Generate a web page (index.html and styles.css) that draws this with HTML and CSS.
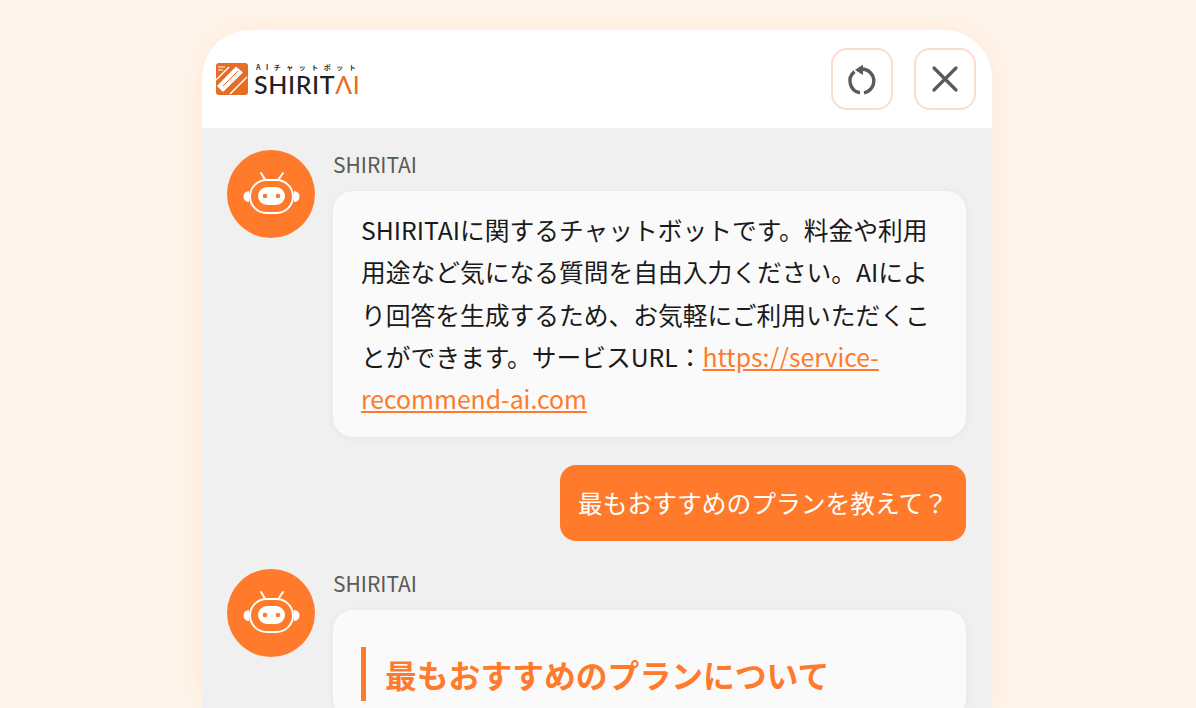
FILE: index.html
```html
<!DOCTYPE html>
<html lang="ja">

<head>
  <meta charset="UTF-8">
  <meta name="viewport" content="width=device-width, initial-scale=1.0">
  <title>SHIRITAI</title>
  <link rel="stylesheet" href="styles.css">
</head>

<body>

  <div class="panel">
    <header class="header">
      <div class="logo">
        <svg class="logo-mark" width="32" height="32" viewBox="0 0 32 32">
          <rect width="32" height="32" rx="3" fill="#e56d25"/>
          <path d="M2 4h7M2 7h5" stroke="#fff" stroke-width="1.200"/>
          <path d="M0 17L13 4" stroke="#fff" stroke-width="1.500"/>
          <path d="M7 29l-6-6L20 3.500l7 6z" fill="#fff"/>
          <path d="M7 23L22 8" stroke="#e56d25" stroke-width="1"/>
          <path d="M14 31L31 14" stroke="#fff" stroke-width="1.500"/>
        </svg>
        <div class="logo-text">
          <span class="logo-sub">AIチャットボット</span>
          <span class="logo-name">SHIRIT<span class="logo-ai">ΛI</span></span>
        </div>
      </div>
      <div class="header-buttons">
        <button class="icon-button" aria-label="リセット">
          <svg width="32" height="34" viewBox="0 0 32 34" fill="none" stroke="#5a5a5a" stroke-width="3.400">
            <path d="M14 30.800A12 12 0 0 1 8.500 9.600"/>
            <path d="M18 30.800A12 12 0 0 0 16 7"/>
            <path d="M9 8L17 2.500V13z" fill="#5a5a5a" stroke="none"/>
          </svg>
        </button>
        <button class="icon-button" aria-label="閉じる">
          <svg width="28" height="28" viewBox="0 0 28 28" fill="none" stroke="#5a5a5a" stroke-width="3.200" stroke-linecap="round">
            <path d="M3 3l22 22M25 3L3 25"/>
          </svg>
        </button>
      </div>
    </header>

    <main class="chat">
      <div class="message">
        <div class="avatar">
          <svg width="60" height="52" viewBox="0 0 60 52">
            <path d="M20 5l4 6.500M42 5l-4.500 6.500" stroke="#fff" stroke-width="2" stroke-linecap="round"/>
            <rect x="9" y="12" width="43" height="33" rx="16.500" fill="none" stroke="#fff" stroke-width="2"/>
            <path d="M8 23a5.500 5.500 0 0 0 0 11zM53 23a5.500 5.500 0 0 1 0 11z" fill="#fff"/>
            <rect x="17" y="19" width="27" height="18" rx="9" fill="#fff"/>
            <circle cx="24" cy="28" r="2.300" fill="#ff7a2b"/>
            <circle cx="37" cy="28" r="2.300" fill="#ff7a2b"/>
          </svg>
        </div>
        <div class="message-body">
          <div class="sender">SHIRITAI</div>
          <div class="bubble">
            SHIRITAIに関するチャットボットです。料金や利用用途など気になる質問を自由入力ください。AIにより回答を生成するため、お気軽にご利用いただくことができます。サービスURL：<a href="#">https://service-recommend-ai.com</a>
          </div>
        </div>
      </div>

      <div class="user-row">
        <div class="user-bubble">最もおすすめのプランを教えて？</div>
      </div>

      <div class="message">
        <div class="avatar">
          <svg width="60" height="52" viewBox="0 0 60 52">
            <path d="M20 5l4 6.500M42 5l-4.500 6.500" stroke="#fff" stroke-width="2" stroke-linecap="round"/>
            <rect x="9" y="12" width="43" height="33" rx="16.500" fill="none" stroke="#fff" stroke-width="2"/>
            <path d="M8 23a5.500 5.500 0 0 0 0 11zM53 23a5.500 5.500 0 0 1 0 11z" fill="#fff"/>
            <rect x="17" y="19" width="27" height="18" rx="9" fill="#fff"/>
            <circle cx="24" cy="28" r="2.300" fill="#ff7a2b"/>
            <circle cx="37" cy="28" r="2.300" fill="#ff7a2b"/>
          </svg>
        </div>
        <div class="message-body">
          <div class="sender">SHIRITAI</div>
          <div class="bubble bubble-answer">
            <h2>最もおすすめのプランについて</h2>
          </div>
        </div>
      </div>
    </main>
  </div>

</body>

</html>
```

FILE: styles.css
```css
body {
  margin: 0;
  height: 708px;
  overflow: hidden;
  background-color: #fff5ec;
  font-family: "Noto Sans CJK JP", "Noto Sans", sans-serif;
  color: #1a1a1a;
  display: flex;
  justify-content: center;
  padding-top: 30px;
  box-sizing: border-box;
}

.panel {
  width: 790px;
  height: 678px;
  flex-shrink: 0;
  margin-left: -2px;
  background-color: #f0f0f0;
  border-radius: 48px 48px 0 0;
  box-shadow: 0 0 32px rgba(255, 122, 43, 0.1);
  overflow: hidden;
}

.header {
  height: 98px;
  background-color: #fff;
  display: flex;
  justify-content: space-between;
  align-items: center;
  padding: 0 16px 0 14px;
}

.logo {
  display: flex;
  align-items: center;
  gap: 6px;
}

.logo-text {
  display: flex;
  flex-direction: column;
  line-height: 1;
}

.logo-sub {
  font-size: 7px;
  line-height: 8px;
  font-weight: 700;
  letter-spacing: 5.500px;
  color: #333;
  padding-left: 2px;
  margin-bottom: 2px;
}

.logo-name {
  font-family: "Lato", "Noto Sans", sans-serif;
  font-size: 25px;
  line-height: 22px;
  font-weight: 500;
  letter-spacing: 0.600px;
  color: #222;
}

.logo-ai {
  color: #e56d25;
  font-weight: 400;
}

.header-buttons {
  display: flex;
  gap: 21px;
}

.icon-button {
  width: 62px;
  height: 62px;
  padding: 0;
  background-color: #fff;
  border: 2px solid #fcdccb;
  border-radius: 16px;
  display: flex;
  justify-content: center;
  align-items: center;
  cursor: pointer;
}

.chat {
  padding: 22px 26px 0 25px;
  display: flex;
  flex-direction: column;
  gap: 28px;
}

.message {
  display: flex;
  gap: 18px;
}

.avatar {
  width: 88px;
  height: 88px;
  flex-shrink: 0;
  border-radius: 50%;
  background-color: #ff7a2b;
  display: flex;
  justify-content: center;
  align-items: center;
}

.message-body {
  flex: 1;
}

.sender {
  font-size: 21px;
  line-height: 28px;
  color: #595959;
  margin-bottom: 13px;
}

.bubble {
  background-color: #fafafa;
  border-radius: 20px;
  padding: 17px 29px 18px 28px;
  font-size: 24.750px;
  line-height: 42.250px;
  box-shadow: 0 1px 8px rgba(0, 0, 0, 0.05);
}

.bubble a {
  color: #ff7a2b;
}

.user-row {
  display: flex;
  justify-content: flex-end;
}

.user-bubble {
  background-color: #ff7a2b;
  color: #fff;
  border-radius: 16px;
  padding: 16px 18px;
  font-size: 24.750px;
  line-height: 43.500px;
}

.bubble-answer {
  padding-top: 37px;
}

.bubble-answer h2 {
  margin: 0;
  border-left: 5px solid #ff7a2b;
  padding-left: 19px;
  font-size: 31.800px;
  line-height: 54px;
  font-weight: 700;
  color: #ff7a2b;
}
```
